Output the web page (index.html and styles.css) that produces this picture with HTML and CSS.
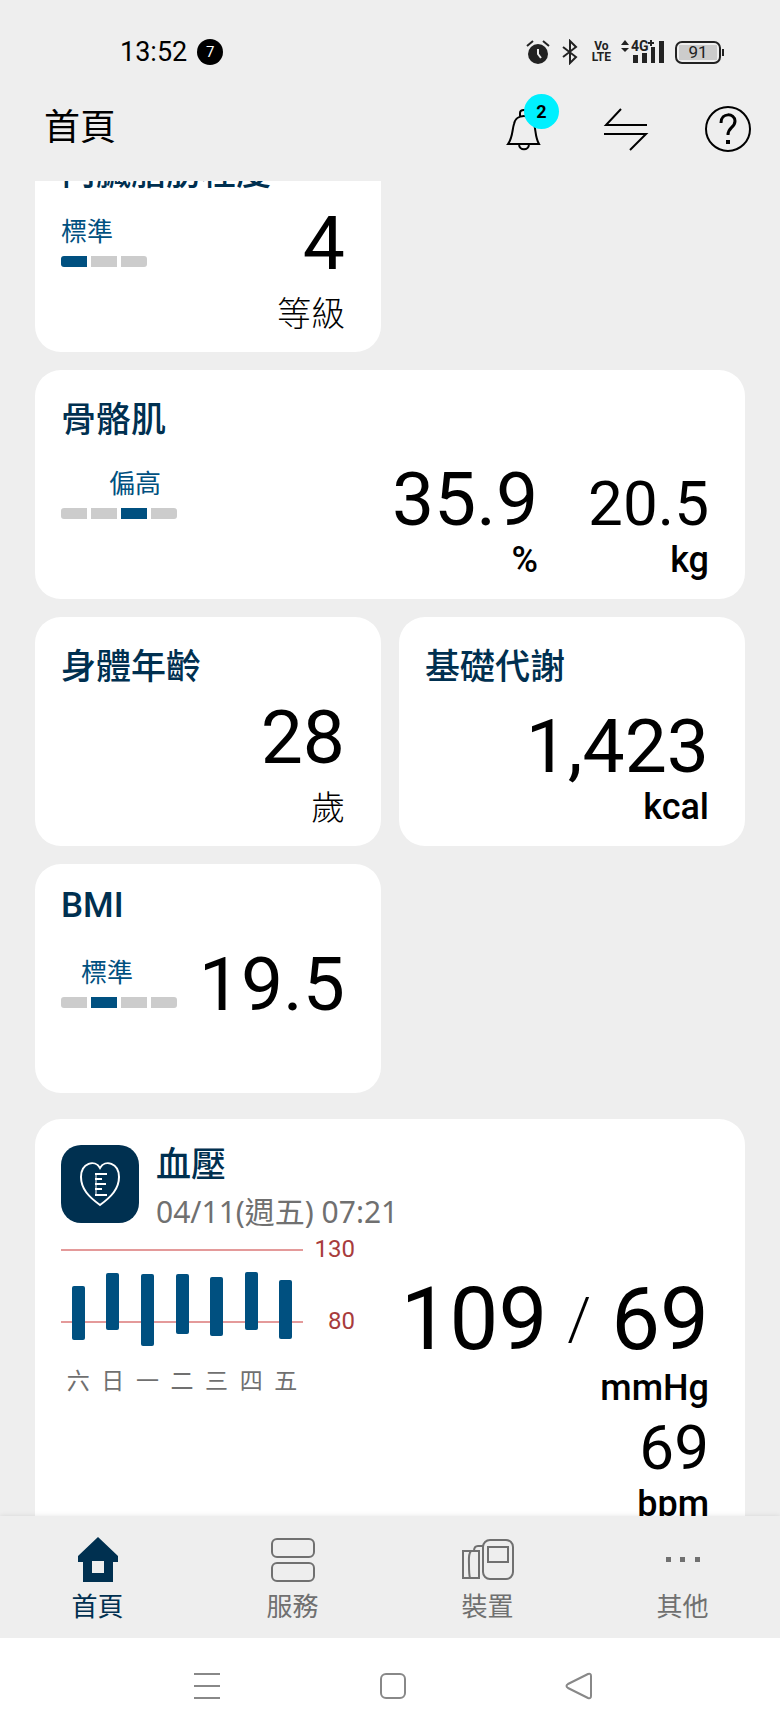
FILE: index.html
```
<!DOCTYPE html>
<html lang="zh-Hant">

<head>
	<meta charset="utf-8">
	<meta name="viewport" content="width=device-width, initial-scale=1">
	<title>首頁</title>
	<link rel="stylesheet" href="styles.css">
</head>

<body>
	<div class="status">
		<span class="clock">13:52</span>
		<span class="count">7</span>
		<div class="status-icons">
			<svg class="alarm" width="24" height="26" viewBox="0 0 24 26">
				<circle cx="12" cy="15" r="10" fill="#222"/>
				<path d="M1 7l6-5M23 7l-6-5" stroke="#222" stroke-width="2"/>
				<path d="M12 10v5l3 4" fill="none" stroke="#eee" stroke-width="2"/>
			</svg>
			<svg class="bluetooth" width="16" height="26" viewBox="0 0 16 26">
				<path d="M1 8l13 10-6 6V2l6 6L1 18" fill="none" stroke="#222" stroke-width="2"/>
			</svg>
			<span class="volte">Vo<br>LTE</span>
			<svg class="signal" width="44" height="26" viewBox="0 0 44 26">
				<path d="M0 6l4-5 4 5zM0 9l4 4 4-4z" fill="#222"/>
				<text x="10" y="12" class="signal-text">4G</text>
				<path d="M30 1v6M27 4h6" stroke="#222" stroke-width="2"/>
				<path d="M12 16h5v8h-5zM21 14h5v10h-5zM30 8h4v16h-4zM38 2h5v22h-5z" fill="#222"/>
			</svg>
			<span class="battery"><span class="battery-level">91</span></span>
		</div>
	</div>

	<header>
		<h1>首頁</h1>
		<button type="button" class="icon-button" aria-label="通知">
			<svg width="48" height="48" viewBox="0 0 48 48" fill="none" stroke="#000" stroke-width="2">
				<path d="M8 39h31c-4-7-3-14-5-20-2-6-6-8-10-8s-9 2-10 8c-2 6-1 13-6 20z"/>
				<path d="M20 11V8c0-4 8-4 8 0v3M19 39c0 7 10 7 10 0"/>
			</svg>
			<span class="badge">2</span>
		</button>
		<button type="button" class="icon-button" aria-label="傳輸">
			<svg width="48" height="48" viewBox="0 0 48 48" fill="none" stroke="#000" stroke-width="2">
				<path d="M45 20H4L19 4M2 29h42L28 45"/>
			</svg>
		</button>
		<button type="button" class="icon-button" aria-label="說明">
			<svg width="48" height="48" viewBox="0 0 48 48" fill="none" stroke="#000" stroke-width="2">
				<circle cx="24" cy="24" r="22"/>
				<path d="M17 18c0-11 14-10 14-2 0 7-7 6-7 14" stroke-width="3"/>
				<path d="M22 35h4v4h-4z" fill="#000" stroke="none"/>
			</svg>
		</button>
	</header>

	<main>
		<div class="cards">
			<section class="card">
				<h2>內臟脂肪程度</h2>
				<div class="card-body">
					<div class="level">
						<span class="level-label first">標準</span>
						<div class="level-bar"><i class="on"></i><i></i><i></i></div>
					</div>
					<div class="reading">
						<span class="value">4</span>
						<span class="unit unit-zh">等級</span>
					</div>
				</div>
			</section>

			<section class="card wide">
				<h2>骨骼肌</h2>
				<div class="card-body low">
					<div class="level">
						<span class="level-label third">偏高</span>
						<div class="level-bar"><i></i><i></i><i class="on"></i><i></i></div>
					</div>
					<div class="readings">
						<div class="reading">
							<span class="value">35.9</span>
							<span class="unit">%</span>
						</div>
						<div class="reading">
							<span class="value small">20.5</span>
							<span class="unit">kg</span>
						</div>
					</div>
				</div>
			</section>

			<section class="card">
				<h2>身體年齡</h2>
				<div class="card-body">
					<div class="reading">
						<span class="value">28</span>
						<span class="unit unit-zh">歲</span>
					</div>
				</div>
			</section>

			<section class="card">
				<h2>基礎代謝</h2>
				<div class="card-body low">
					<div class="reading">
						<span class="value">1,423</span>
						<span class="unit">kcal</span>
					</div>
				</div>
			</section>

			<section class="card">
				<h2 class="latin">BMI</h2>
				<div class="card-body">
					<div class="level">
						<span class="level-label second">標準</span>
						<div class="level-bar"><i></i><i class="on"></i><i></i><i></i></div>
					</div>
					<div class="reading">
						<span class="value">19.5</span>
					</div>
				</div>
			</section>
		</div>

		<section class="card pressure">
			<div class="pressure-head">
				<svg class="pressure-icon" width="78" height="78" viewBox="0 0 78 78">
					<rect width="78" height="78" rx="20" fill="#003050"/>
					<path d="M39 60C28 52 20 44 20 32c0-14 14-18 19-9 5-9 19-5 19 9 0 12-8 20-19 28z" fill="none" stroke="#fff" stroke-width="2"/>
					<path d="M34 29h12M34 34h7M34 39h11M34 44h7M34 50h12" stroke="#fff" stroke-width="2"/>
					<path d="M35 28v23" stroke="#fff" stroke-width="1"/>
				</svg>
				<div>
					<h2>血壓</h2>
					<p class="date">04/11(週五) 07:21</p>
				</div>
			</div>
			<div class="pressure-body">
				<div class="chart">
					<svg class="plot" width="242" height="112" viewBox="0 0 242 112">
						<path d="M0 13h242M0 85h242" stroke="#e49a9a" stroke-width="2"/>
						<g fill="#005080">
							<rect x="11" y="49" width="13" height="54" rx="2"/>
							<rect x="45" y="36" width="13" height="57" rx="2"/>
							<rect x="80" y="37" width="13" height="72" rx="2"/>
							<rect x="115" y="37" width="13" height="60" rx="2"/>
							<rect x="149" y="40" width="13" height="59" rx="2"/>
							<rect x="184" y="35" width="13" height="58" rx="2"/>
							<rect x="218" y="43" width="13" height="59" rx="2"/>
						</g>
					</svg>
					<div class="days">
						<span>六</span><span>日</span><span>一</span><span>二</span><span>三</span><span>四</span><span>五</span>
					</div>
				</div>
				<div class="limits">
					<span>130</span>
					<span>80</span>
				</div>
				<div class="reading">
					<div class="value large">
						<span>109</span>
						<span class="slash">/</span>
						<span>69</span>
					</div>
					<span class="unit">mmHg</span>
					<span class="value small pulse">69</span>
					<span class="unit">bpm</span>
				</div>
			</div>
		</section>
	</main>

	<nav class="tabs">
		<a href="#" class="active">
			<svg width="52" height="52" viewBox="0 0 52 52">
				<path d="M26 3l20 19v6h-5v20H11V28H6v-6z" fill="#003050"/>
				<path d="M20 27h12v12H20z" fill="#eee"/>
			</svg>
			首頁
		</a>
		<a href="#">
			<svg width="52" height="52" viewBox="0 0 52 52" fill="none" stroke="#707070" stroke-width="2">
				<rect x="5" y="5" width="42" height="18" rx="5"/>
				<rect x="5" y="29" width="42" height="18" rx="5"/>
			</svg>
			服務
		</a>
		<a href="#">
			<svg width="52" height="52" viewBox="0 0 52 52" fill="none" stroke="#707070" stroke-width="2">
				<rect x="21" y="6" width="30" height="39" rx="7"/>
				<path d="M26 13h20v15H26zM1 17h16v27H1zM9 17c-3 3-2 9-2 14s0 10 1 13M12 17c0-3 1-5 4-5h5"/>
			</svg>
			裝置
		</a>
		<a href="#">
			<svg width="52" height="52" viewBox="0 0 52 52">
				<path d="M9 23h5v5H9zM23 23h5v5h-5zM38 23h5v5h-5z" fill="#707070"/>
			</svg>
			其他
		</a>
	</nav>

	<div class="system-nav">
		<button type="button" aria-label="最近">
			<svg width="28" height="28" viewBox="0 0 28 28" fill="none" stroke="#888" stroke-width="2">
				<path d="M1 2h26M1 14h26M1 26h26"/>
			</svg>
		</button>
		<button type="button" aria-label="主畫面">
			<svg width="28" height="28" viewBox="0 0 28 28" fill="none" stroke="#888" stroke-width="2">
				<rect x="2" y="2" width="24" height="24" rx="5"/>
			</svg>
		</button>
		<button type="button" aria-label="返回">
			<svg width="28" height="28" viewBox="0 0 28 28" fill="none" stroke="#888" stroke-width="2" stroke-linejoin="round">
				<path d="M3 12L23 2q3-1 3 2v20q0 3-3 2L3 16q-3-2 0-4z"/>
			</svg>
		</button>
	</div>
</body>

</html>
```
FILE: styles.css
```
* {
	box-sizing: border-box;
}

body {
	margin: 0;
	height: 100vh;
	display: flex;
	flex-direction: column;
	overflow: hidden;
	background: #eee;
	color: #000;
	font-family: Roboto, "Noto Sans CJK TC", sans-serif;
}

h1, h2, p {
	margin: 0;
}

button {
	border: 0;
	padding: 0;
	background: none;
	color: inherit;
	font-family: inherit;
}

svg {
	display: block;
}

/* phone status bar */
.status {
	flex: none;
	height: 104px;
	padding: 0 56px 0 120px;
	display: flex;
	align-items: center;
}

.clock {
	font-size: 27px;
}

.count {
	width: 26px;
	height: 26px;
	margin-left: 10px;
	border-radius: 50%;
	background: #000;
	color: #fff;
	font-size: 15px;
	line-height: 26px;
	text-align: center;
}

.status-icons {
	margin-left: auto;
	display: flex;
	align-items: center;
	color: #222;
}

.bluetooth {
	margin-left: 12px;
}

.volte {
	margin-left: 14px;
	font-size: 12px;
	font-weight: bold;
	line-height: 11px;
	text-align: center;
}

.signal {
	margin-left: 10px;
}

.signal-text {
	font-size: 14px;
	font-weight: bold;
	fill: #222;
}

.battery {
	position: relative;
	width: 46px;
	margin: 0 3px 0 10px;
	padding: 2px;
	border: 2px solid #222;
	border-radius: 7px;
}

.battery::after {
	content: "";
	position: absolute;
	top: 6px;
	right: -5px;
	width: 2px;
	height: 7px;
	background: #222;
}

.battery-level {
	display: block;
	background: #ccc;
	font-size: 17px;
	line-height: 15px;
	text-align: center;
}

/* title bar */
header {
	flex: none;
	height: 77px;
	padding: 1px 28px 0 44px;
	display: flex;
	align-items: flex-start;
	gap: 54px;
}

h1 {
	flex: 1;
	font-size: 36px;
	font-weight: 400;
	line-height: 46px;
}

.icon-button {
	position: relative;
	width: 48px;
	height: 48px;
}

.badge {
	position: absolute;
	top: -11px;
	left: 24px;
	width: 35px;
	height: 35px;
	border-radius: 50%;
	background: #00f0ff;
	font-size: 18px;
	font-weight: bold;
	line-height: 36px;
	text-align: center;
}

/* cards, scrolled a little way down */
main {
	flex: 1;
	min-height: 0;
	overflow: hidden;
	padding: 0 35px;
}

.cards {
	display: grid;
	grid-template-columns: 1fr 1fr;
	gap: 18px;
	margin-top: -58px;
}

.card {
	min-height: 229px;
	padding: 26px 36px 0 26px;
	border-radius: 26px;
	background: #fff;
}

.cards .card {
	grid-column-start: 1;
}

.cards .card:nth-child(4) {
	grid-column-start: 2;
}

.cards .wide {
	grid-column: 1 / 3;
}

h2 {
	min-height: 50px;
	color: #003050;
	font-size: 35px;
	font-weight: 500;
	line-height: 50px;
}

h2.latin {
	line-height: 32px;
}

.card-body {
	display: flex;
	padding-top: 6px;
}

.card-body.low {
	padding-top: 15px;
}

.level {
	padding-top: 8px;
}

.low .level {
	padding-top: 4px;
}

.level-label {
	display: block;
	color: #005080;
	font-size: 26px;
	line-height: 38px;
}

.level-label.second {
	padding-left: 20px;
}

.level-label.third {
	padding-left: 48px;
}

.level-bar {
	display: flex;
	gap: 4px;
	margin-top: 5px;
	border-radius: 3px;
	overflow: hidden;
}

.level-bar i {
	width: 26px;
	height: 11px;
	background: #ccc;
}

.level-bar .on {
	background: #005080;
}

.readings {
	display: flex;
	align-items: flex-end;
	gap: 50px;
	margin-left: auto;
}

.reading {
	margin-left: auto;
	display: flex;
	flex-direction: column;
	align-items: flex-end;
}

.value {
	font-size: 75px;
	line-height: 76px;
}

.value.small {
	font-size: 62px;
	line-height: 66px;
}

.value.large {
	display: flex;
	align-items: center;
	font-size: 87px;
	line-height: 92px;
}

.unit {
	font-size: 36px;
	font-weight: 500;
	line-height: 46px;
}

.unit-zh {
	font-size: 34px;
	font-weight: 300;
	line-height: 66px;
}

/* blood pressure */
.pressure {
	margin-top: 26px;
	padding-bottom: 26px;
}

.pressure-head {
	display: flex;
	gap: 17px;
}

.pressure h2 {
	min-height: 0;
	line-height: 42px;
}

.date {
	color: #707070;
	font-family: "Noto Sans", "Noto Sans CJK TC", sans-serif;
	font-size: 30px;
	line-height: 50px;
}

.pressure-body {
	display: flex;
}

.days {
	display: grid;
	grid-template-columns: repeat(7, 1fr);
	margin-top: 21px;
	color: #707070;
	font-size: 23px;
	line-height: 24px;
	text-align: center;
}

.limits {
	width: 52px;
	display: flex;
	flex-direction: column;
	gap: 48px;
	color: #a83c3c;
	font-size: 24px;
	line-height: 24px;
	text-align: right;
}

.pressure .reading {
	padding-top: 36px;
}

.slash {
	margin: 0 20px;
	font-size: 60px;
	font-weight: 300;
}

.pulse {
	margin-top: 4px;
}

/* bottom tabs */
.tabs {
	flex: none;
	height: 122px;
	display: grid;
	grid-template-columns: repeat(4, 1fr);
	padding-top: 18px;
	background: #eee;
	box-shadow: 0 0 5px rgba(0, 0, 0, 0.1);
	position: relative;
}

.tabs a {
	display: flex;
	flex-direction: column;
	align-items: center;
	color: #707070;
	font-size: 26px;
	line-height: 42px;
	text-decoration: none;
}

.tabs .active {
	color: #003050;
}

.system-nav {
	position: relative;
	flex: none;
	height: 95px;
	padding-left: 6px;
	display: flex;
	justify-content: center;
	align-items: center;
	gap: 158px;
	background: #fff;
}
```
